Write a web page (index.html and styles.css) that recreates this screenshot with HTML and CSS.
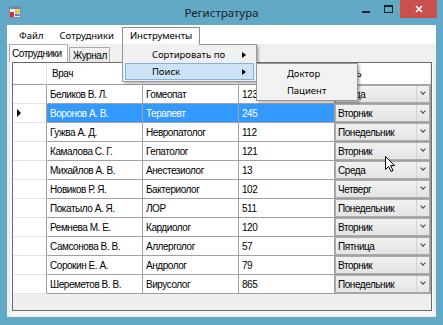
FILE: index.html
```html
<!DOCTYPE html>
<html lang="ru">
<head>
    <meta charset="UTF-8">
    <title>Регистратура</title>
    <link rel="stylesheet" href="styles.css">
</head>
<body>
<div class="window">
    <div class="titlebar">
        <svg class="app-icon" width="12" height="12" viewBox="0 0 12 12">
            <rect x="0.5" y="0.5" width="11" height="11" fill="#e8eef5" stroke="#7d8fa6"/>
            <rect x="1" y="1" width="10" height="2" fill="#5c86c4"/>
            <rect x="6" y="3.5" width="5" height="4" fill="#f2c12e"/>
            <rect x="1" y="6" width="4" height="5" fill="#d8302c"/>
            <rect x="6" y="8" width="2" height="2" fill="#3a6fd0"/>
            <rect x="8.5" y="8" width="2" height="2" fill="#3a6fd0"/>
        </svg>
        <div class="title">Регистратура</div>
        <div class="controls">
            <span class="ctl"><span class="min-glyph"></span></span>
            <span class="ctl"><span class="max-glyph"></span></span>
            <span class="ctl close">
                <svg width="8" height="8" viewBox="0 0 8 8"><path d="M1 1L7 7M7 1L1 7" stroke="#fff" stroke-width="1.7"/></svg>
            </span>
        </div>
    </div>

    <div class="client">
        <div class="menubar">
            <span class="menu-item">Файл</span>
            <span class="menu-item">Сотрудники</span>
            <span class="menu-item open">Инструменты
                <div class="dropdown">
                    <div class="drop-item">Сортировать по<span class="sub-arrow"></span></div>
                    <div class="drop-item hover">Поиск<span class="sub-arrow"></span></div>
                    <div class="submenu">
                        <div class="drop-item">Доктор</div>
                        <div class="drop-item">Пациент</div>
                    </div>
                </div>
            </span>
        </div>

        <div class="tab-strip">
            <span class="tab active">Сотрудники</span>
            <span class="tab">Журнал</span>
        </div>

        <div class="tab-page">
            <div class="grid">
                <div class="cell corner"></div>
                <div class="cell head">Врач</div>
                <div class="cell head">Специальность</div>
                <div class="cell head">Кабинет</div>
                <div class="cell head">День</div>

                <div class="cell rowhead"></div>
                <div class="cell">Беликов В. Л.</div>
                <div class="cell">Гомеопат</div>
                <div class="cell">123</div>
                <div class="cell day"><div class="combo"><span class="val">Среда</span><span class="btn"></span></div></div>

                <div class="cell rowhead"><span class="current"></span></div>
                <div class="cell sel">Воронов А. В.</div>
                <div class="cell sel">Терапевт</div>
                <div class="cell sel">245</div>
                <div class="cell day"><div class="combo"><span class="val">Вторник</span><span class="btn"></span></div></div>

                <div class="cell rowhead"></div>
                <div class="cell">Гужва А. Д.</div>
                <div class="cell">Невропатолог</div>
                <div class="cell">112</div>
                <div class="cell day"><div class="combo"><span class="val">Понедельник</span><span class="btn"></span></div></div>

                <div class="cell rowhead"></div>
                <div class="cell">Камалова С. Г.</div>
                <div class="cell">Гепатолог</div>
                <div class="cell">121</div>
                <div class="cell day"><div class="combo"><span class="val">Вторник</span><span class="btn"></span></div></div>

                <div class="cell rowhead"></div>
                <div class="cell">Михайлов А. В.</div>
                <div class="cell">Анестезиолог</div>
                <div class="cell">13</div>
                <div class="cell day"><div class="combo"><span class="val">Среда</span><span class="btn"></span></div></div>

                <div class="cell rowhead"></div>
                <div class="cell">Новиков Р. Я.</div>
                <div class="cell">Бактериолог</div>
                <div class="cell">102</div>
                <div class="cell day"><div class="combo"><span class="val">Четверг</span><span class="btn"></span></div></div>

                <div class="cell rowhead"></div>
                <div class="cell">Покатыло А. Я.</div>
                <div class="cell">ЛОР</div>
                <div class="cell">511</div>
                <div class="cell day"><div class="combo"><span class="val">Понедельник</span><span class="btn"></span></div></div>

                <div class="cell rowhead"></div>
                <div class="cell">Ремнева М. Е.</div>
                <div class="cell">Кардиолог</div>
                <div class="cell">120</div>
                <div class="cell day"><div class="combo"><span class="val">Вторник</span><span class="btn"></span></div></div>

                <div class="cell rowhead"></div>
                <div class="cell">Самсонова В. В.</div>
                <div class="cell">Аллерголог</div>
                <div class="cell">57</div>
                <div class="cell day"><div class="combo"><span class="val">Пятница</span><span class="btn"></span></div></div>

                <div class="cell rowhead"></div>
                <div class="cell">Сорокин Е. А.</div>
                <div class="cell">Андролог</div>
                <div class="cell">79</div>
                <div class="cell day"><div class="combo"><span class="val">Вторник</span><span class="btn"></span></div></div>

                <div class="cell rowhead"></div>
                <div class="cell">Шереметов В. В.</div>
                <div class="cell">Вирусолог</div>
                <div class="cell">865</div>
                <div class="cell day"><div class="combo"><span class="val">Понедельник</span><span class="btn"></span></div></div>
            </div>
        </div>
    </div>

    <!-- mouse pointer over the grid -->
    <svg class="cursor" width="11" height="17" viewBox="0 0 11 17">
        <path d="M0.5 0.5 L0.5 13.5 L3.5 10.5 L6 15.5 L8 14.5 L5.6 9.6 L9.5 9.6 Z" fill="#fff" stroke="#000" stroke-width="1"/>
    </svg>
</div>
</body>
</html>
```

FILE: styles.css
```css
body {
    margin: 0;
    font-family: "Liberation Sans", Arial, sans-serif;
}
.window {
    width: 443px;
    height: 325px;
    background: #61a9c6;
    display: flex;
    flex-direction: column;
    position: relative;
    overflow: hidden;
}

/* title bar */
.titlebar {
    height: 25px;
    display: grid;
    grid-template-columns: 1fr auto 1fr;
    align-items: start;
}
.app-icon {
    margin: 6px 0 0 9px;
}
.title {
    font-family: "Noto Sans", sans-serif;
    font-size: 11.5px;
    color: #1c1c1c;
    padding-top: 5px;
}
.controls {
    display: flex;
    justify-content: flex-end;
    margin-right: 6px;
}
.ctl {
    width: 23px;
    height: 18px;
    display: flex;
    align-items: center;
    justify-content: center;
}
.min-glyph {
    width: 8px;
    height: 2px;
    background: #222;
    margin-top: 5px;
}
.max-glyph {
    width: 9px;
    height: 8px;
    box-sizing: border-box;
    border: 1px solid #222;
    border-top-width: 2px;
    margin-top: -1px;
}
.ctl.close {
    width: 37px;
    background: #c9504d;
}

/* client area */
.client {
    flex: 1;
    margin: 0 7px 8px 7px;
    background: #f0f0f0;
    display: flex;
    flex-direction: column;
}

.menubar {
    height: 19px;
    background: #fff;
    display: flex;
    align-items: flex-start;
    padding-left: 4px;
    font-family: "Noto Sans", sans-serif;
    font-size: 9.5px;
    color: #000;
}
.menu-item {
    margin-top: 2px;
    height: 17px;
    line-height: 16px;
    padding: 0 7px;
    border: 1px solid transparent;
    border-bottom: none;
    box-sizing: border-box;
    position: relative;
}
.menu-item.open {
    border-color: #8e8e8e;
    background: #fbfbfb;
}
.menu-item.open::after {
    content: "";
    position: absolute;
    left: 0;
    right: 0;
    bottom: -1px;
    height: 1px;
    background: #f0f0f0;
    z-index: 3;
}

.dropdown {
    position: absolute;
    left: -1px;
    top: 100%;
    width: 135px;
    box-sizing: border-box;
    border: 1px solid #979797;
    background: #f0f0f0;
    padding: 1px 2px;
    box-shadow: 2px 2px 2px rgba(0, 0, 0, 0.25);
    z-index: 2;
}
.drop-item {
    height: 17px;
    box-sizing: border-box;
    border: 1px solid transparent;
    padding-left: 26px;
    display: flex;
    align-items: center;
}
.drop-item.hover {
    background: #cce3f7;
    border-color: #7db2e8;
}
.sub-arrow {
    margin-left: auto;
    margin-right: 7px;
    width: 0;
    height: 0;
    border-left: 4px solid #000;
    border-top: 3.5px solid transparent;
    border-bottom: 3.5px solid transparent;
}
.submenu {
    position: absolute;
    left: 100%;
    top: 18px;
    width: 102px;
    box-sizing: border-box;
    border: 1px solid #979797;
    background: #f2f2f2;
    padding: 1px 2px;
    box-shadow: 2px 2px 2px rgba(0, 0, 0, 0.25);
}
.submenu .drop-item {
    padding-left: 27px;
}

/* tabs */
.tab-strip {
    height: 18px;
    display: flex;
    align-items: flex-end;
    padding-left: 2px;
    font-size: 10px;
    letter-spacing: -0.45px;
}
.tab {
    box-sizing: border-box;
    border: 1px solid #acacac;
    border-bottom: none;
    display: flex;
    align-items: center;
}
.tab.active {
    width: 59px;
    height: 18px;
    background: #fff;
    padding-left: 2px;
}
.tab:not(.active) {
    width: 41px;
    height: 15px;
    margin-left: 1px;
    background: linear-gradient(#f3f3f3, #e6e6e6);
    padding-left: 3px;
}

.tab-page {
    flex: 1;
    padding: 0 2px 3px 4px;
    border: 1px solid #e9e9e9;
    border-top: none;
    margin: 0 1px 0 2px;
    background: #f7f7f7;
    display: flex;
}

/* data grid */
.grid {
    width: 420px;
    height: 249px;
    box-sizing: border-box;
    border: 1px solid #6b6b6b;
    margin-left: -2px;
    background: #efefef;
    display: grid;
    grid-template-columns: 34px repeat(4, 96px);
    grid-template-rows: 22px;
    grid-auto-rows: 19px;
    align-content: start;
    font-size: 10px;
    letter-spacing: -0.45px;
    color: #000;
}
.cell {
    box-sizing: border-box;
    border-right: 1px solid #a0a0a0;
    border-bottom: 1px solid #a0a0a0;
    background: #fff;
    display: flex;
    align-items: center;
    padding-left: 3px;
    white-space: nowrap;
    overflow: hidden;
}
.cell.head {
    padding-left: 5px;
    border-right-color: #e3e3e3;
}
.cell.corner {
    border-right-color: #e3e3e3;
}
.cell.rowhead {
    border-bottom-color: #dde4ea;
    padding-left: 4px;
}
.cell.sel {
    background: #3399ff;
    color: #fff;
}
.current {
    width: 0;
    height: 0;
    border-left: 4px solid #000;
    border-top: 4px solid transparent;
    border-bottom: 4px solid transparent;
}
.cell.day {
    padding: 0;
}
.combo {
    width: 100%;
    height: 100%;
    box-sizing: border-box;
    border: 1px solid #acacac;
    background: linear-gradient(#f1f1f1, #e4e4e4);
    display: flex;
    align-items: center;
}
.combo .val {
    flex: 1;
    padding-left: 2px;
}
.combo .btn {
    width: 13px;
    height: 100%;
    box-sizing: border-box;
    border-left: 1px solid #d2d2d2;
    position: relative;
}
.combo .btn::after {
    content: "";
    position: absolute;
    left: 4px;
    top: 4px;
    width: 3px;
    height: 3px;
    border-right: 1.3px solid #444;
    border-bottom: 1.3px solid #444;
    transform: rotate(45deg);
}

.cursor {
    position: absolute;
    left: 385px;
    top: 156px;
}
```
